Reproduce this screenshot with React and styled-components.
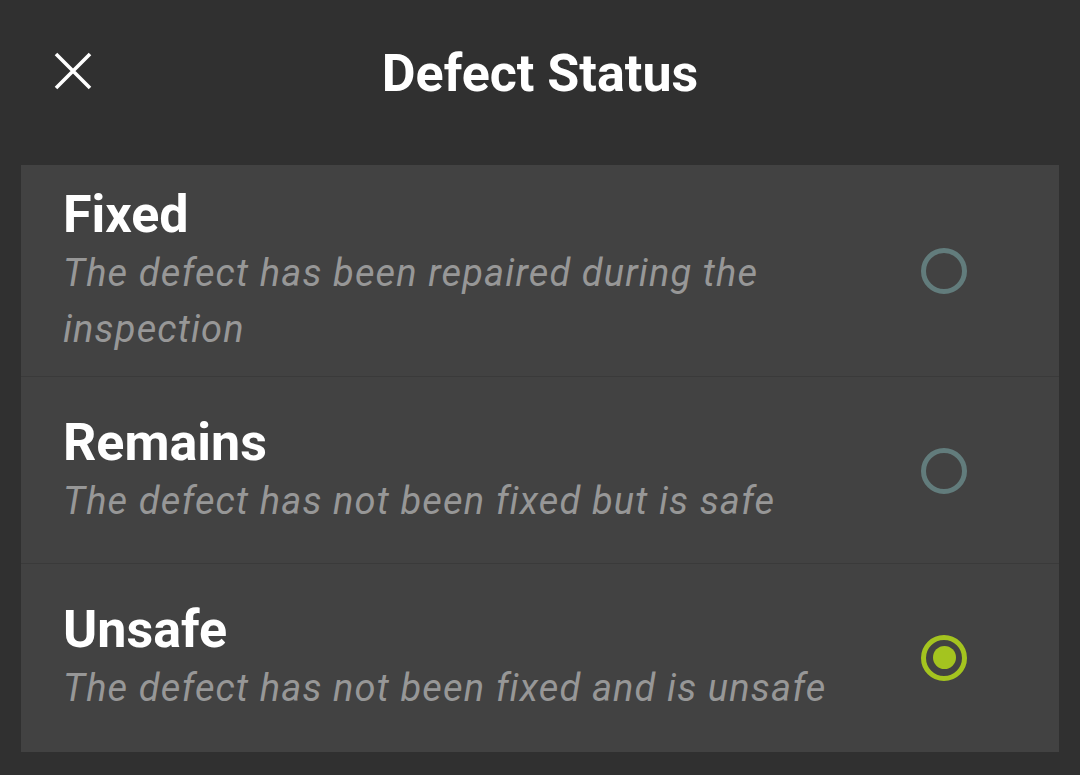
import React, { useState } from "react";
import styled, { createGlobalStyle } from "styled-components";

const GlobalStyle = createGlobalStyle`
  html, body {
    margin: 0;
    padding: 0;
    background: #303030;
  }
  body {
    font-family: Roboto, "Noto Sans", sans-serif;
  }
`;

const Screen = styled.div`
  width: 1080px;
  height: 775px;
  background: #303030;
  display: flex;
  flex-direction: column;
  overflow: hidden;
`;

const Header = styled.div`
  height: 146px;
  flex-shrink: 0;
  position: relative;
  display: flex;
  align-items: center;
  justify-content: center;
`;

const CloseButton = styled.button`
  position: absolute;
  left: 49px;
  top: 47px;
  width: 48px;
  height: 48px;
  padding: 0;
  border: none;
  background: transparent;
  display: flex;
  align-items: center;
  justify-content: center;
  cursor: pointer;
`;

const Title = styled.h1`
  margin: 0;
  font-size: 52px;
  font-weight: 700;
  color: #ffffff;
  letter-spacing: 0;
`;

const Panel = styled.div`
  margin: 19px 21px 0;
  flex-shrink: 0;
  background: #424242;
  display: flex;
  flex-direction: column;
`;

const Row = styled.label`
  min-height: 147px;
  padding: 20px 92px 19px 42px;
  display: flex;
  align-items: center;
  gap: 24px;
  cursor: pointer;
  & + & {
    border-top: 1px solid #3a3a3a;
  }
  &:last-child {
    padding-bottom: 21px;
  }
`;

const TextBlock = styled.div`
  flex: 1;
  display: flex;
  flex-direction: column;
`;

const OptionTitle = styled.div`
  font-size: 52px;
  line-height: 60px;
  font-weight: 700;
  color: #ffffff;
`;

const OptionDesc = styled.div`
  font-size: 38px;
  line-height: 56px;
  font-style: italic;
  letter-spacing: 1.15px;
  color: #979797;
  max-width: 800px;
`;

const Radio = styled.span`
  width: 46px;
  height: 46px;
  box-sizing: border-box;
  border-radius: 50%;
  border: 5px solid ${({ checked }) => (checked ? "#a4c41f" : "#627c7c")};
  display: flex;
  align-items: center;
  justify-content: center;
  flex-shrink: 0;
  &::after {
    content: "";
    width: 23px;
    height: 23px;
    border-radius: 50%;
    background: #a4c41f;
    display: ${({ checked }) => (checked ? "block" : "none")};
  }
`;

const options = [
  { id: "fixed", title: "Fixed", desc: "The defect has been repaired during the inspection" },
  { id: "remains", title: "Remains", desc: "The defect has not been fixed but is safe" },
  { id: "unsafe", title: "Unsafe", desc: "The defect has not been fixed and is unsafe" },
];

const CloseIcon = () => (
  <svg width="38" height="38" viewBox="0 0 38 38">
    <path d="M2 2 L36 36 M36 2 L2 36" stroke="#ffffff" strokeWidth="3.6" fill="none" />
  </svg>
);

export default function App() {
  const [status, setStatus] = useState("unsafe");
  return (
    <Screen>
      <GlobalStyle />
      <Header>
        <CloseButton aria-label="Close">
          <CloseIcon />
        </CloseButton>
        <Title>Defect Status</Title>
      </Header>
      <Panel>
        {options.map((o) => (
          <Row key={o.id} onClick={() => setStatus(o.id)}>
            <TextBlock>
              <OptionTitle>{o.title}</OptionTitle>
              <OptionDesc>{o.desc}</OptionDesc>
            </TextBlock>
            <Radio checked={status === o.id} />
          </Row>
        ))}
      </Panel>
    </Screen>
  );
}
